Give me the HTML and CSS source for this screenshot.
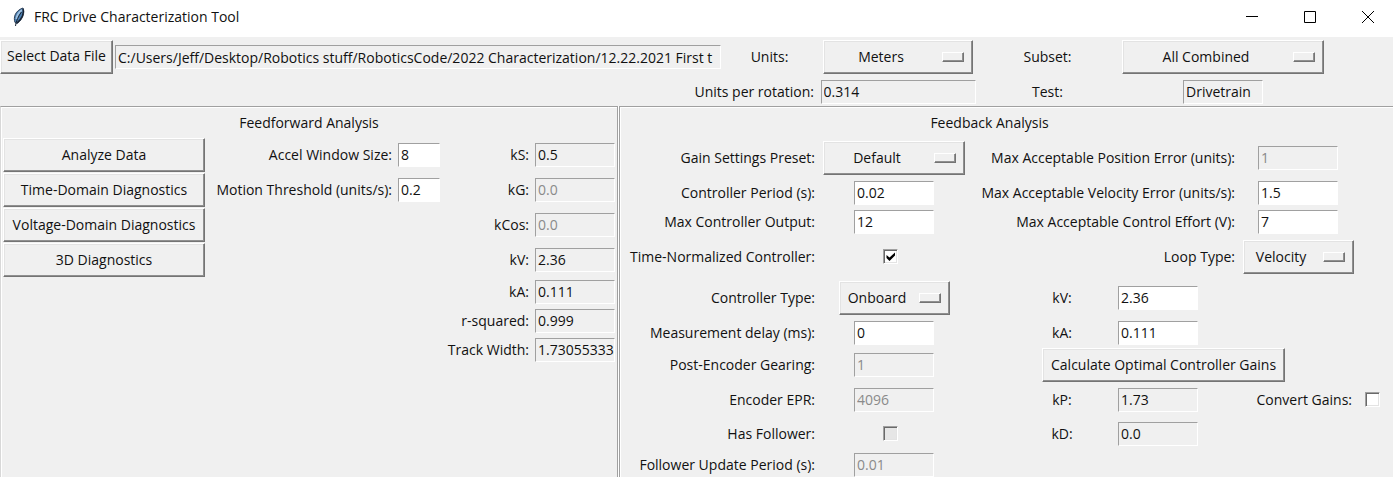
FILE: index.html
```
<!DOCTYPE html>
<html lang="en">
<head>
<meta charset="utf-8">
<title>FRC Drive Characterization Tool</title>
<link rel="stylesheet" href="styles.css">
</head>
<body>
<header class="titlebar">
  <svg class="feather" width="14" height="20" viewBox="0 0 14 20" aria-hidden="true">
    <path d="M3 15.500C1 10 3.500 3.500 11 1C13 5 11 12.500 5 16.500Z" fill="#4a7fb2" stroke="#2c3e55" stroke-width="1"/>
    <path d="M4.500 12C5 8 7 5 10 3" fill="none" stroke="#9fc2e2" stroke-width="2"/>
    <path d="M11 2C12.500 6 10 12 5 16" fill="none" stroke="#1a2230" stroke-width="1.500"/>
    <path d="M3.500 19C4 14 6.500 9 9.500 5" fill="none" stroke="#1c2634" stroke-width="1"/>
  </svg>
  <h1 class="title">FRC Drive Characterization Tool</h1>
  <div class="window-buttons">
    <button class="window-button" aria-label="Minimize"><svg width="12" height="12" viewBox="0 0 12 12"><path d="M0 5.500H12" stroke="#000"/></svg></button>
    <button class="window-button" aria-label="Maximize"><svg width="12" height="12" viewBox="0 0 12 12"><path d="M.5.500H11.500V11.500H.5Z" fill="none" stroke="#000"/></svg></button>
    <button class="window-button" aria-label="Close"><svg width="12" height="12" viewBox="0 0 12 12"><path d="M0 0L12 12M12 0L0 12" stroke="#000"/></svg></button>
  </div>
</header>
<main>
  <section class="toolbar">
    <button class="button">Select Data File</button>
    <input class="entry wide" aria-label="Data file" readonly value="C:/Users/Jeff/Desktop/Robotics stuff/RoboticsCode/2022 Characterization/12.22.2021 First t">
    <label class="center" for="units">Units:</label>
    <span class="menu menu-medium"><select id="units"><option>Meters</option></select></span>
    <label class="center" for="subset">Subset:</label>
    <span class="menu menu-large"><select id="subset"><option>All Combined</option></select></span>
    <label class="rotation-label" for="rotation">Units per rotation:</label>
    <input class="entry rotation" id="rotation" readonly value="0.314">
    <label class="center" for="test">Test:</label>
    <input class="entry" id="test" readonly value="Drivetrain">
  </section>
  <div class="panels">
    <section class="panel">
      <h2 class="heading">Feedforward Analysis</h2>
      <div class="feedforward">
        <div class="actions">
          <button class="button">Analyze Data</button>
          <button class="button">Time-Domain Diagnostics</button>
          <button class="button">Voltage-Domain Diagnostics</button>
          <button class="button">3D Diagnostics</button>
        </div>
        <div class="fields settings">
          <label for="window">Accel Window Size:</label><input class="entry" id="window" value="8">
          <label for="threshold">Motion Threshold (units/s):</label><input class="entry" id="threshold" value="0.2">
        </div>
        <div class="fields results">
          <label for="ks">kS:</label><input class="entry" id="ks" readonly value="0.5">
          <label for="kg">kG:</label><input class="entry" id="kg" disabled value="0.0">
          <label for="kcos">kCos:</label><input class="entry" id="kcos" disabled value="0.0">
          <label for="kv">kV:</label><input class="entry" id="kv" readonly value="2.36">
          <label for="ka">kA:</label><input class="entry" id="ka" readonly value="0.111">
          <label for="r2">r-squared:</label><input class="entry" id="r2" readonly value="0.999">
          <label for="track">Track Width:</label><input class="entry" id="track" readonly value="1.7305533333">
        </div>
      </div>
    </section>
    <section class="panel panel-right">
      <h2 class="heading">Feedback Analysis</h2>
      <div class="feedback">
        <div class="fields controller">
          <label for="preset">Gain Settings Preset:</label><span class="menu menu-default"><select id="preset"><option>Default</option></select></span>
          <label for="period">Controller Period (s):</label><input class="entry" id="period" value="0.02">
          <label for="output">Max Controller Output:</label><input class="entry" id="output" value="12">
          <label for="normalized">Time-Normalized Controller:</label><input class="check" type="checkbox" id="normalized" checked>
          <label for="type">Controller Type:</label><span class="menu menu-small"><select id="type"><option>Onboard</option></select></span>
          <label for="delay">Measurement delay (ms):</label><input class="entry" id="delay" value="0">
          <label for="gearing">Post-Encoder Gearing:</label><input class="entry" id="gearing" disabled value="1">
          <label for="epr">Encoder EPR:</label><input class="entry" id="epr" disabled value="4096">
          <label for="follower">Has Follower:</label><input class="check" type="checkbox" id="follower" disabled>
          <label for="update">Follower Update Period (s):</label><input class="entry" id="update" disabled value="0.01">
        </div>
        <div>
          <div class="fields limits">
            <label for="poserr">Max Acceptable Position Error (units):</label><input class="entry" id="poserr" disabled value="1">
            <label for="velerr">Max Acceptable Velocity Error (units/s):</label><input class="entry" id="velerr" value="1.5">
            <label for="effort">Max Acceptable Control Effort (V):</label><input class="entry" id="effort" value="7">
            <label for="loop">Loop Type:</label><span class="menu menu-small"><select id="loop"><option>Velocity</option></select></span>
          </div>
          <div class="gains">
            <label for="gkv">kV:</label><input class="entry" id="gkv" value="2.36">
            <label for="gka">kA:</label><input class="entry" id="gka" value="0.111">
            <button class="button calculate">Calculate Optimal Controller Gains</button>
            <label for="kp">kP:</label><input class="entry" id="kp" readonly value="1.73">
            <span class="convert"><label for="convert">Convert Gains:</label><input class="check" type="checkbox" id="convert"></span>
            <label for="kd">kD:</label><input class="entry" id="kd" readonly value="0.0">
          </div>
        </div>
      </div>
    </section>
  </div>
</main>
</body>
</html>
```
FILE: styles.css
```
* { box-sizing: border-box; }
html { height: 100%; }
body {
  display: flex;
  flex-direction: column;
  height: 100%;
  margin: 0;
  overflow: hidden;
  background: #f0f0f0;
  color: #111;
  font: 14px/20px "Open Sans", "Noto Sans", sans-serif;
}
h1, h2 { margin: 0; font: inherit; }
label { white-space: nowrap; }

.titlebar {
  display: flex;
  flex: none;
  align-items: center;
  height: 37px;
  padding-left: 12px;
  padding-bottom: 4px;
  background: #fff;
}
.feather { margin-right: 8px; }
.title { flex: 1; }
.window-buttons { display: flex; margin-right: -4px; }
.window-button {
  display: flex;
  align-items: center;
  justify-content: center;
  width: 58px;
  height: 32px;
  padding: 0;
  border: 0;
  background: transparent;
}

main { display: flex; flex: 1; flex-direction: column; min-height: 0; }

.button, .menu select {
  height: 34px;
  border: 1px solid;
  border-color: #fff #747474 #747474 #fff;
  border-radius: 0;
  background: #f0f0f0;
  box-shadow: inset -1px -1px #909090, inset 1px 1px #e3e3e3;
  color: inherit;
  font: inherit;
  white-space: nowrap;
}
.button { padding: 0 4px 2px; }

.entry {
  width: 80px;
  height: 24px;
  padding: 0 0 0 2px;
  border: 1px solid;
  border-color: #a0a0a0 #fff #fff #a0a0a0;
  border-radius: 0;
  background: #fff;
  color: #111;
  font: inherit;
}
.entry:read-only { background: #f0f0f0; }
.entry:disabled { background: #f0f0f0; color: #8a8a8a; }

.menu { position: relative; display: block; }
.menu select {
  display: block;
  width: 100%;
  padding: 0 34px 0 0;
  appearance: none;
  text-align: center;
  text-align-last: center;
}
.menu::after {
  content: "";
  position: absolute;
  top: 12px;
  right: 9px;
  width: 20px;
  height: 8px;
  border: 1px solid;
  border-color: #fff #747474 #747474 #fff;
  box-shadow: inset -1px -1px #909090;
  pointer-events: none;
}
.menu-small { width: 111px; }
.menu-default { width: 142px; }
.menu-medium { width: 150px; }
.menu-large { width: 202px; }

.check {
  width: 15px;
  height: 15px;
  margin: 0;
  appearance: none;
  border: 1px solid;
  border-color: #a0a0a0 #fff #fff #a0a0a0;
  background: #fff;
  box-shadow: inset 1px 1px #696969, inset -1px -1px #e3e3e3;
}
.check:checked {
  background: #fff url("data:image/svg+xml,%3Csvg xmlns='http://www.w3.org/2000/svg' viewBox='0 0 13 13'%3E%3Cpath d='M2.500 5L5.500 7.500L11 2.500V5.500L5.500 11L2.500 8Z'/%3E%3C/svg%3E") center / 13px 13px;
}
.check:disabled { background: #e6e6e6; }

.toolbar {
  display: grid;
  grid-template-columns: 113px minmax(0, 1fr) 97px 160px 139px 212px;
  grid-template-rows: 40px 29px;
  flex: none;
  align-items: center;
  justify-items: center;
  padding-right: 64px;
}
.toolbar .button { width: 113px; }
.toolbar .wide { justify-self: stretch; width: auto; margin: 0 0 0 2px; }
.rotation-label { grid-column: 1 / 4; justify-self: end; padding-right: 4px; }
.toolbar .rotation { width: 155px; }

.panels { display: grid; grid-template-columns: 618fr 774fr; flex: 1; gap: 1px; min-height: 0; }
.panel {
  min-width: 0;
  border: 1px solid #a0a0a0;
  border-bottom: 0;
  border-left-color: #d8d8d8;
  box-shadow: inset 1px 1px #fff, 1px 0 #fff;
}
.panel-right { border-left-color: #a0a0a0; border-right: 0; }
.heading { padding: 6px 0 4px; text-align: center; }
.panel-right .heading { padding-right: 34px; }

.feedforward {
  display: grid;
  grid-template-columns: 203px 235px 1fr;
  padding: 0 2px 0 2px;
}
.actions { display: grid; grid-auto-rows: 35px; align-items: center; justify-items: stretch; }
.actions .button { margin-right: 1px; padding-bottom: 0; }
.fields { display: grid; align-items: center; justify-items: end; align-content: start; }
.settings { grid-template-columns: 1fr 49px; grid-auto-rows: 35px; }
.settings .entry { width: 42px; margin-right: 1px; }
.results { grid-template-columns: 1fr 86px; grid-template-rows: repeat(4, 35px) repeat(3, 29px); }

.feedback { display: grid; grid-template-columns: 353fr 420fr; }
.controller {
  grid-template-columns: 195fr 158fr;
  grid-template-rows: 41px 29px 29px 41px 41px 29px 35px 35px 33px 29px;
}
.limits { grid-template-columns: 262fr 158fr; grid-template-rows: 41px 29px 29px 41px; }
.controller > :nth-child(even) { justify-self: center; }
.limits > :nth-child(even) { justify-self: center; margin-right: 32px; }
.controller .check { margin-right: 8px; }
.gains {
  display: grid;
  grid-template-columns: 69px 40px 36px 97px 1fr;
  grid-template-rows: 41px 29px 35px 35px 33px;
  align-items: center;
}
.gains > label { grid-column: 2; justify-self: center; }
.gains > .entry { grid-column: 4; }
.gains .calculate { grid-column: 2 / 6; justify-self: start; padding: 0 8px; }
.convert {
  display: flex;
  align-items: center;
  justify-content: flex-end;
  gap: 13px;
  grid-column: 5;
  padding-right: 13px;
}
```
